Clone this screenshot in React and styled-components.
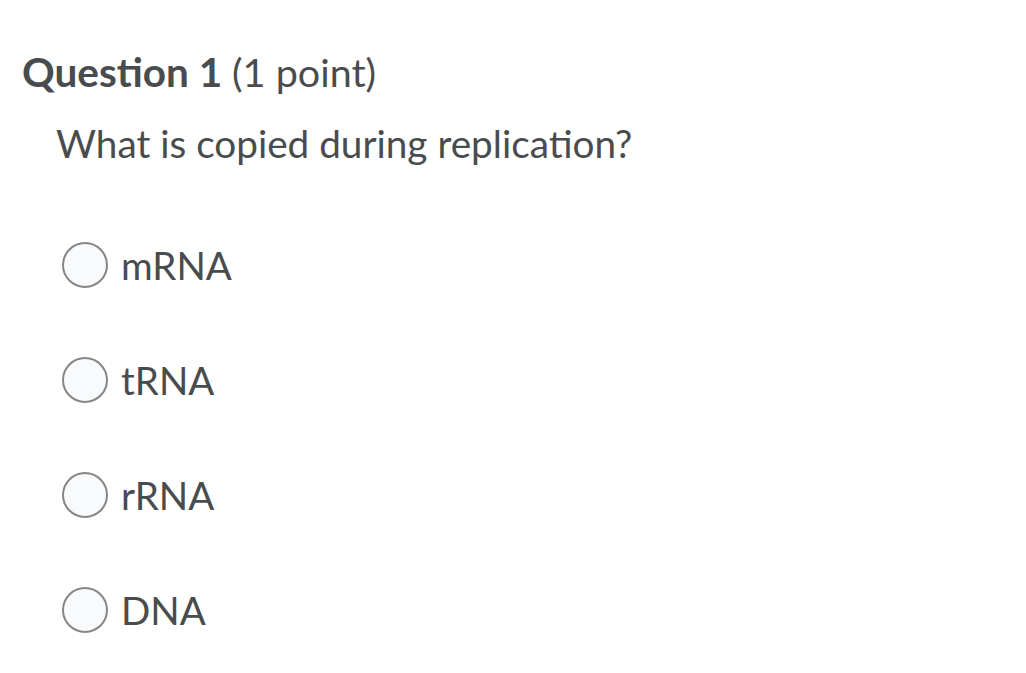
import styled, { createGlobalStyle } from "styled-components";

const GlobalStyle = createGlobalStyle`
  body {
    margin: 0;
    background: #ffffff;
    font-family: Lato, "Noto Sans", sans-serif;
    color: #494c4e;
  }
`;

const Page = styled.div`
  padding: 48px 0 0 22px;
`;

const Title = styled.h2`
  margin: 0;
  font-size: 40.5px;
  line-height: 48px;
  font-weight: 700;
`;

const Points = styled.span`
  font-size: 39.5px;
  font-weight: 400;
`;

const Prompt = styled.p`
  margin: 23px 0 0 34px;
  font-size: 38.7px;
  line-height: 48px;
`;

const Choices = styled.div`
  display: flex;
  flex-direction: column;
  gap: 67px;
  margin: 74px 0 0 40px;
`;

const Choice = styled.label`
  display: flex;
  align-items: center;
  gap: 13px;
  height: 48px;
  font-size: 38.5px;
`;

const Radio = styled.span`
  width: 42px;
  height: 42px;
  border-radius: 50%;
  border: 2px solid #868686;
  background: #f9fafb;
  flex-shrink: 0;
`;

const options = ["mRNA", "tRNA", "rRNA", "DNA"];

export default function App() {
  return (
    <>
      <GlobalStyle />
      <Page>
        <Title>
          Question 1 <Points>(1 point)</Points>
        </Title>
        <Prompt>What is copied during replication?</Prompt>
        <Choices>
          {options.map((o) => (
            <Choice key={o}>
              <Radio />
              {o}
            </Choice>
          ))}
        </Choices>
      </Page>
    </>
  );
}
